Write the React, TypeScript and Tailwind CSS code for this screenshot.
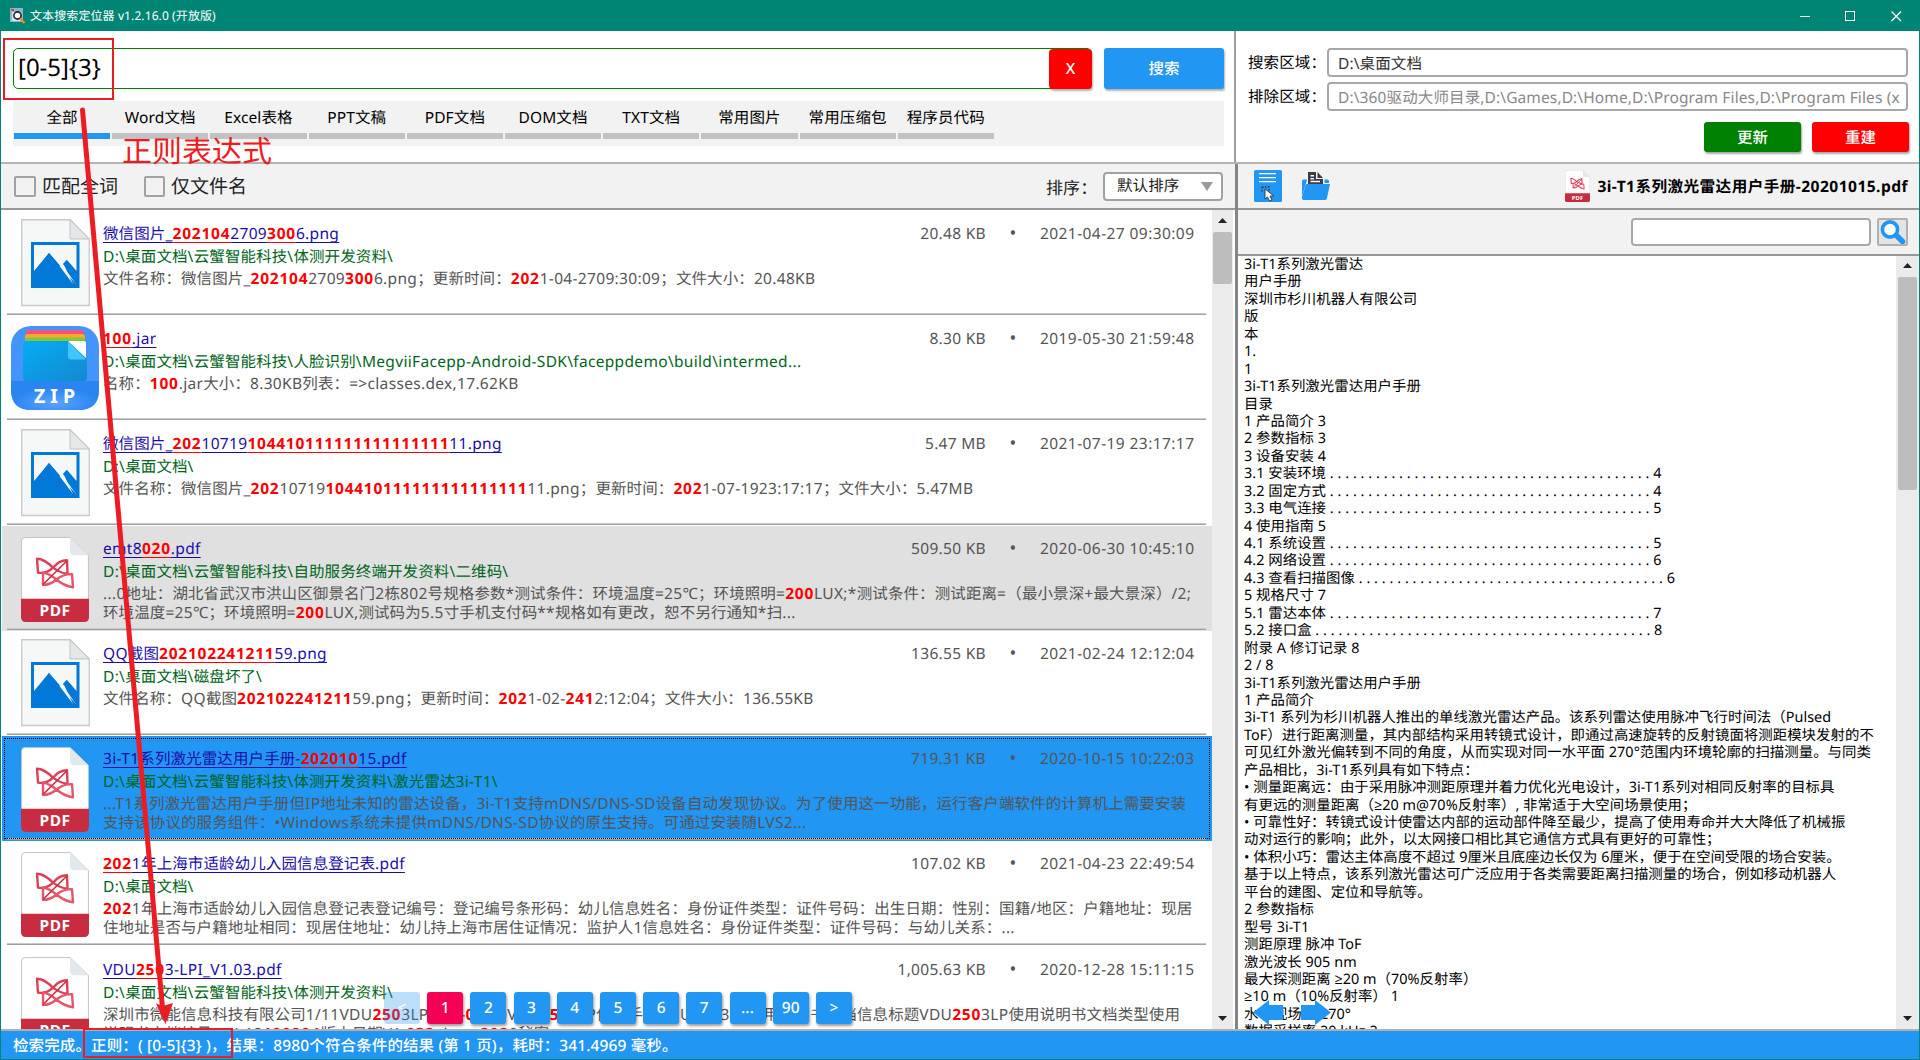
import React from "react";

type Kind = "image" | "zip" | "pdf";

interface Item {
  kind: Kind;
  title: string;
  path: string;
  desc: string[];
  size: string;
  date: string;
  state?: "hover" | "selected";
}

const items: Item[] = [
  {
    kind: "image",
    title: "微信图片_«202104»2709«300»6.png",
    path: "D:\\桌面文档\\云蟹智能科技\\体测开发资料\\",
    desc: ["文件名称：微信图片_«202104»2709«300»6.png；更新时间：«202»1-04-2709:30:09；文件大小：20.48KB"],
    size: "20.48 KB",
    date: "2021-04-27 09:30:09",
  },
  {
    kind: "zip",
    title: "«100».jar",
    path: "D:\\桌面文档\\云蟹智能科技\\人脸识别\\MegviiFacepp-Android-SDK\\faceppdemo\\build\\intermed...",
    desc: ["名称：«100».jar大小：8.30KB列表：=>classes.dex,17.62KB"],
    size: "8.30 KB",
    date: "2019-05-30 21:59:48",
  },
  {
    kind: "image",
    title: "微信图片_«202»10719«104410111111111111111»11.png",
    path: "D:\\桌面文档\\",
    desc: ["文件名称：微信图片_«202»10719«104410111111111111111»11.png；更新时间：«202»1-07-1923:17:17；文件大小：5.47MB"],
    size: "5.47 MB",
    date: "2021-07-19 23:17:17",
  },
  {
    kind: "pdf",
    title: "emt8«020».pdf",
    path: "D:\\桌面文档\\云蟹智能科技\\自助服务终端开发资料\\二维码\\",
    desc: [
      "...0地址：湖北省武汉市洪山区御景名门2栋802号规格参数*测试条件：环境温度=25℃；环境照明=«200»LUX;*测试条件：测试距离=（最小景深+最大景深）/2;",
      "环境温度=25℃；环境照明=«200»LUX,测试码为5.5寸手机支付码**规格如有更改，恕不另行通知*扫...",
    ],
    size: "509.50 KB",
    date: "2020-06-30 10:45:10",
    state: "hover",
  },
  {
    kind: "image",
    title: "QQ截图«202102241211»59.png",
    path: "D:\\桌面文档\\磁盘坏了\\",
    desc: ["文件名称：QQ截图«202102241211»59.png；更新时间：«202»1-02-«241»2:12:04；文件大小：136.55KB"],
    size: "136.55 KB",
    date: "2021-02-24 12:12:04",
  },
  {
    kind: "pdf",
    title: "3i-T1系列激光雷达用户手册-«202010»15.pdf",
    path: "D:\\桌面文档\\云蟹智能科技\\体测开发资料\\激光雷达3i-T1\\",
    desc: [
      "...T1系列激光雷达用户手册但IP地址未知的雷达设备，3i-T1支持mDNS/DNS-SD设备自动发现协议。为了使用这一功能，运行客户端软件的计算机上需要安装",
      "支持该协议的服务组件：•Windows系统未提供mDNS/DNS-SD协议的原生支持。可通过安装随LVS2...",
    ],
    size: "719.31 KB",
    date: "2020-10-15 10:22:03",
    state: "selected",
  },
  {
    kind: "pdf",
    title: "«202»1年上海市适龄幼儿入园信息登记表.pdf",
    path: "D:\\桌面文档\\",
    desc: [
      "«202»1年上海市适龄幼儿入园信息登记表登记编号：登记编号条形码：幼儿信息姓名：身份证件类型：证件号码：出生日期：性别：国籍/地区：户籍地址：现居",
      "住地址是否与户籍地址相同：现居住地址：幼儿持上海市居住证情况：监护人1信息姓名：身份证件类型：证件号码：与幼儿关系：...",
    ],
    size: "107.02 KB",
    date: "2021-04-23 22:49:54",
  },
  {
    kind: "pdf",
    title: "VDU«250»3-LPI_V1.03.pdf",
    path: "D:\\桌面文档\\云蟹智能科技\\体测开发资料\\",
    desc: [
      "深圳市微能信息科技有限公司1/11VDU«250»3LPI_V1-«0»01.0VDU«250»3LP使用手册VDU«250»3LP使用说明书文档信息标题VDU«250»3LP使用说明书文档类型使用",
      "说明书文档编号WN-19«100904»版本日期V1.«032»xinyu «202»0秘密",
    ],
    size: "1,005.63 KB",
    date: "2020-12-28 15:11:15",
  },
];

const dots = (n: number) => Array(n).fill(".").join(" ");

const docLines = [
  "3i-T1系列激光雷达",
  "用户手册",
  "深圳市杉川机器人有限公司",
  "版",
  "本",
  "1.",
  "1",
  "3i-T1系列激光雷达用户手册",
  "目录",
  "1 产品简介 3",
  "2 参数指标 3",
  "3 设备安装 4",
  "3.1 安装环境 " + dots(42) + " 4",
  "3.2 固定方式 " + dots(42) + " 4",
  "3.3 电气连接 " + dots(42) + " 5",
  "4 使用指南 5",
  "4.1 系统设置 " + dots(42) + " 5",
  "4.2 网络设置 " + dots(42) + " 6",
  "4.3 查看扫描图像 " + dots(40) + " 6",
  "5 规格尺寸 7",
  "5.1 雷达本体 " + dots(42) + " 7",
  "5.2 接口盒 " + dots(44) + " 8",
  "附录 A 修订记录 8",
  "2 / 8",
  "3i-T1系列激光雷达用户手册",
  "1 产品简介",
  "3i-T1 系列为杉川机器人推出的单线激光雷达产品。该系列雷达使用脉冲飞行时间法（Pulsed",
  "ToF）进行距离测量，其内部结构采用转镜式设计，即通过高速旋转的反射镜面将测距模块发射的不",
  "可见红外激光偏转到不同的角度，从而实现对同一水平面 270°范围内环境轮廓的扫描测量。与同类",
  "产品相比，3i-T1系列具有如下特点：",
  "• 测量距离远：由于采用脉冲测距原理并着力优化光电设计，3i-T1系列对相同反射率的目标具",
  "有更远的测量距离（≥20 m@70%反射率）, 非常适于大空间场景使用；",
  "• 可靠性好：转镜式设计使雷达内部的运动部件降至最少，提高了使用寿命并大大降低了机械振",
  "动对运行的影响；此外，以太网接口相比其它通信方式具有更好的可靠性；",
  "• 体积小巧：雷达主体高度不超过 9厘米且底座边长仅为 6厘米，便于在空间受限的场合安装。",
  "基于以上特点，该系列激光雷达可广泛应用于各类需要距离扫描测量的场合，例如移动机器人",
  "平台的建图、定位和导航等。",
  "2 参数指标",
  "型号 3i-T1",
  "测距原理 脉冲 ToF",
  "激光波长 905 nm",
  "最大探测距离 ≥20 m（70%反射率）",
  "≥10 m（10%反射率） 1",
  "水平视场角 270°",
  "数据采样率 20 kHz 2",
];

const tabs = ["全部", "Word文档", "Excel表格", "PPT文稿", "PDF文档", "DOM文档", "TXT文档", "常用图片", "常用压缩包", "程序员代码"];
const pages = ["<", "1", "2", "3", "4", "5", "6", "7", "...", "90", ">"];

/* Splits a string into highlighted («…»), Latin and CJK runs. */
function Marked({ text, link = false }: { text: string; link?: boolean }) {
  const line = link ? " underline decoration-1 underline-offset-[3px] [text-decoration-skip-ink:none]" : "";
  return (
    <>
      {text.split(/(«[^»]*»|[\x20-\x7e]+)/).map((part, i) =>
        part.startsWith("«") ? (
          <b key={i} className={"font-bold tracking-[0.75px] text-[#ff0000]" + line}>
            {part.slice(1, -1)}
          </b>
        ) : (
          <span key={i} className={(i % 2 ? "tracking-[0.32px]" : "tracking-[0.1px]") + line}>
            {part}
          </span>
        ),
      )}
    </>
  );
}

function ImageIcon() {
  return (
    <svg width="69" height="88" viewBox="0 0 69 88" className="block">
      <path d="M.75 .75H49L68.25 20V86.5H.75z" fill="#f6f8f8" stroke="#c6c9cb" strokeWidth="1.3" />
      <path d="M49 .75 68.25 20H49z" fill="#e4e6e7" stroke="#c2c5c7" strokeWidth="1" />
      <rect x="10" y="23" width="48.500" height="46" fill="#0078d7" />
      <path d="M13 26H55.500V52L46 41 42 46 46 51 55.500 66 28 34 13 52z" fill="#f6f8f8" />
      <path d="M13 54 28 34 46 55 55.500 66V68H13z" fill="#0078d7" />
      <path d="M41 46 45.500 41 56 53.500V66z" fill="#0078d7" />
      <path d="M38.500 47 52 65 43.500 47 41 44z" fill="#f6f8f8" />
    </svg>
  );
}

function PdfIcon({ small = false }: { small?: boolean }) {
  return (
    <svg width={small ? 25 : 68} height={small ? 32 : 85} viewBox="0 0 68 86" preserveAspectRatio="none" className="block">
      <path d="M4 .6H49L67.4 18.5V81Q67.4 85.4 63 85.4H5Q.6 85.4 .6 81V4Q.6 .6 4 .6z" fill="#fff" stroke="#bfc5ca" strokeWidth="1" />
      <path d="M49 .6 67.4 18.5H53Q49 18.5 49 15z" fill="#e3e8ec" />
      <path d="M0 62.5H68V81Q68 86 63 86H5Q0 86 0 81z" fill="#c72c41" />
      <g fill="none" strokeWidth={small ? 3 : 2.4} strokeLinejoin="round">
        <path d="M16 22C22 22 28 27 32 31 36 26 40 23.500 46 23.500L46.500 37C40 37 35 33 32 31 28 35 22 37 17 36z" stroke="#dc3f56" />
        <path d="M22 36C28 37 32 40 35.500 43 40 39 46 37.500 51 37.500L52 51C46 50 40 47 35.500 43 31 47 27 48.500 22 48.500z" stroke="#e85468" />
        <path d="M46 24 22 48" stroke="#cc2f45" strokeWidth={small ? 2 : 1.6} />
      </g>
      <text x="34" y="79.5" textAnchor="middle" className="font-['Noto_Sans'] text-[15.5px] font-bold tracking-[0.5px]" fill="#fff">
        PDF
      </text>
    </svg>
  );
}

function ZipIcon() {
  return (
    <svg width="88" height="84" viewBox="0 0 88 84" className="-ml-px block">
      <defs>
        <linearGradient id="folder" x1="0" y1="0" x2="1" y2="1">
          <stop offset="0" stopColor="#04acf5" />
          <stop offset="1" stopColor="#1489cf" />
        </linearGradient>
        <radialGradient id="base" cx=".5" cy=".75" r=".5">
          <stop offset="0" stopColor="#5aa5fb" />
          <stop offset="1" stopColor="#2a84f2" />
        </radialGradient>
      </defs>
      <rect width="88" height="84" rx="20" fill="#4395fc" />
      <path d="M0 55H88V64Q88 84 68 84H20Q0 84 0 64z" fill="url(#base)" />
      <rect x="15" y="4" width="58" height="14" rx="3" fill="#f2537c" />
      <rect x="14" y="8" width="60" height="12" rx="3" fill="#fba928" />
      <rect x="14" y="11.500" width="60" height="12" rx="3" fill="#7ec83a" />
      <path d="M14 15H57L76 33V52Q76 55 73 55H15Q12 55 12 52V17Q12 15 14 15z" fill="url(#folder)" />
      <path d="M57 15H73Q75 15 75 17V32z" fill="#fff" />
      <path d="M57 15 75 33.500H60Q57 33.500 57 30z" fill="#43c5fb" />
      <text x="46" y="77" textAnchor="middle" className="font-['Noto_Sans'] text-[19.500px] font-bold tracking-[5px]" fill="#fff">
        ZIP
      </text>
    </svg>
  );
}

function Row({ item, last }: { item: Item; last: boolean }) {
  const bg = item.state === "hover" ? "bg-[#e0e0e0]" : item.state === "selected" ? "bg-[#2196f3]" : "bg-white";
  return (
    <div className={"relative flex h-[105px] w-[1210px] shrink-0 " + bg}>
      <div className="flex w-[101px] shrink-0 justify-center pl-[5px]">
        <div className={item.kind === "zip" ? "pt-[10px]" : item.kind === "pdf" ? "pt-[11px]" : "pt-[8px]"}>
          {item.kind === "image" ? <ImageIcon /> : item.kind === "zip" ? <ZipIcon /> : <PdfIcon />}
        </div>
      </div>
      <div className={"flex min-w-0 flex-1 flex-col " + (last ? "pt-[12px]" : "pt-[11px]")}>
        <div className="flex h-[23px] items-center whitespace-nowrap leading-[23px]">
          <div className="flex-1 text-[#1a0dab]">
            <Marked text={item.title} link />
          </div>
          <div className="tracking-[0.3px] text-[#555]">{item.size}</div>
          <div className="w-[54px] text-center text-[18px] text-[#555]">•</div>
          <div className="w-[172px] tracking-[0.42px] text-[#555]">{item.date}</div>
        </div>
        <div className="h-[23px] leading-[23px] whitespace-nowrap text-[#006621]">
          <Marked text={item.path} />
        </div>
        <div className="pt-px">
          {item.desc.map((d) => (
            <div key={d} className="h-[19px] leading-[19px] whitespace-nowrap text-[#555]">
              <Marked text={d} />
            </div>
          ))}
        </div>
      </div>
      <div className="absolute bottom-px left-[5px] h-[2px] w-[1199px] border-t border-[#c9c9c9] bg-[#a0a0a0]" />
      {item.state === "selected" && <div className="absolute inset-[2px] border border-dotted border-black" />}
    </div>
  );
}

function Arrow({ down = false }: { down?: boolean }) {
  return (
    <svg width="9" height="5" viewBox="0 0 9 5" className="mx-auto block">
      <path d={down ? "M0 0H9L4.500 5z" : "M0 5H9L4.500 0z"} fill="#222" />
    </svg>
  );
}

const field = "rounded-[4px] border-2 border-[#a8a8a8] bg-white";

export default function App() {
  return (
    <div className="relative flex h-[1060px] w-[1920px] flex-col overflow-hidden border-r border-b border-l border-[#008575] bg-white font-['Noto_Sans','Open_Sans','Liberation_Sans','Noto_Sans_CJK_SC',sans-serif] text-[15.5px] tracking-[0.12px] text-black [text-rendering:geometricPrecision]">
      <header className="-mx-px flex h-[31px] shrink-0 items-center bg-[#008575] pl-[9px] text-white">
        <svg width="17" height="17" viewBox="0 0 17 17" className="mr-[4px]">
          <rect x="1" y="1" width="13" height="14" fill="#8fb4cf" />
          <rect x="2" y="2" width="3" height="2" fill="#d9482b" />
          <rect x="3" y="5" width="9" height="9" fill="#d7e4ee" />
          <circle cx="8.500" cy="8.500" r="3.600" fill="#fff" stroke="#222" strokeWidth="1.600" />
          <path d="M11 11.500 15.500 16" stroke="#f08a24" strokeWidth="2.400" />
        </svg>
        <span className="flex-1 text-[12px] tracking-[0.1px]">文本搜索定位器 v1.2.16.0 (开放版)</span>
        <svg width="125" height="12" viewBox="0 0 125 12" fill="none" stroke="#fff" className="block">
          <path d="M5 6.500H15" />
          <rect x="50.500" y="1.500" width="9" height="9" />
          <path d="M96.500 1.500 106 11M106 1.500 96.500 11" strokeWidth="1.200" />
        </svg>
      </header>

      <div className="flex h-[133px] shrink-0 border-b-2 border-[#b5b5b5]">
        <section className="flex w-[1235px] shrink-0 flex-col border-r-2 border-[#a0a0a0] pt-[17px] pl-[12px]">
          <div className="flex">
            <div className="flex h-[41px] w-[1079px] justify-between rounded-[5px] border border-[#008000]">
              <span className="pl-[4px] text-[24px] leading-[38px] tracking-[0px]">[0-5]{"{3}"}</span>
              <span className="-mr-px h-[40px] w-[43px] rounded-[4px] bg-[#ff0000] text-center leading-[38px] font-medium text-white shadow-[1px_2px_2px_rgba(0,0,0,0.3)]">X</span>
            </div>
            <div className="ml-[12px] h-[41px] w-[120px] rounded-[3px] bg-[#2196f3] text-center leading-[40px] font-medium text-white shadow-[1px_2px_2px_rgba(0,0,0,0.3)]">搜索</div>
          </div>
          <div className="mt-[12px] flex h-[45px] w-[1211px] bg-[#f2f2f2] pl-px">
            {tabs.map((t, i) => (
              <div key={t} className="w-[98.2px] pr-[2px]">
                <div className="h-[32px] text-center leading-[33px]">{t}</div>
                <div className={"h-[6px] " + (i === 0 ? "bg-[#2196f3]" : "bg-[#c2c2c4]")} />
              </div>
            ))}
          </div>
        </section>
        <section className="flex-1 pt-[17px] pl-[12px]">
          <div className="flex items-center">
            <span className="w-[79px]">搜索区域：</span>
            <div className={field + " h-[29px] w-[581px] pl-[9px] leading-[26px] text-[#333]"}>D:\桌面文档</div>
          </div>
          <div className="mt-[5px] flex items-center">
            <span className="w-[79px]">排除区域：</span>
            <div className={field + " h-[29px] w-[581px] px-[9px] leading-[26px] text-[#888]"}>
              <div className="w-[562px] overflow-hidden whitespace-nowrap">D:\360驱动大师目录,D:\Games,D:\Home,D:\Program Files,D:\Program Files (x86)</div>
            </div>
          </div>
          <div className="mt-[11px] ml-[456px] flex gap-[11px] text-center leading-[30px] font-medium text-white">
            <div className="h-[30px] w-[97px] rounded-[3px] bg-[#008000] shadow-[1px_2px_2px_rgba(0,0,0,0.35)]">更新</div>
            <div className="h-[30px] w-[97px] rounded-[3px] bg-[#ff0000] shadow-[1px_2px_2px_rgba(0,0,0,0.35)]">重建</div>
          </div>
        </section>
      </div>

      <main className="flex h-[867px] shrink-0 border-b-2 border-[#b0b0b0]">
        <section className="relative flex w-[1234px] shrink-0 flex-col">
          <div className="flex h-[46px] shrink-0 items-center border-b-2 border-[#989898] bg-[#f2f2f2] pl-[13px] text-[#222]">
            <span className="h-[21px] w-[22px] rounded-[2px] border-2 border-[#a2a2a2]" />
            <span className="ml-[6px] w-[102px] text-[19px] tracking-[0px]">匹配全词</span>
            <span className="h-[21px] w-[21px] rounded-[2px] border-2 border-[#a2a2a2]" />
            <span className="ml-[6px] flex-1 text-[19px] tracking-[0px]">仅文件名</span>
            <span className="mt-[3px] w-[57px] text-[17px]">排序：</span>
            <div className="mr-[12px] flex h-[29px] w-[120px] items-center justify-between rounded-[4px] border-2 border-[#a2a2a2] bg-white pr-[8px] pl-[12px]">
              默认排序
              <svg width="12" height="9" viewBox="0 0 12 9">
                <path d="M0 0H12L6 9z" fill="#9a9a9a" />
              </svg>
            </div>
          </div>
          <div className="flex min-h-0 flex-1">
            <div className="flex w-[1211px] flex-col overflow-hidden pt-px pl-px">
              {items.map((it, i) => (
                <Row key={it.title} item={it} last={i === items.length - 1} />
              ))}
            </div>
            <div className="flex w-[21px] flex-col justify-between bg-[#ebebeb] pt-[8px] pb-[8px]">
              <div>
                <Arrow />
                <div className="mx-px mt-[9px] h-[52px] rounded-[2px] bg-[#bdbdbd]" />
              </div>
              <Arrow down />
            </div>
          </div>
          <div className="absolute bottom-[5px] left-[383px] flex gap-[7.200px]">
            {pages.map((p, i) => (
              <div
                key={p}
                className={
                  "h-[32px] w-[36px] rounded-[3px] text-center leading-[31px] font-medium text-white " +
                  (i === 0 ? "bg-[#2196f3] opacity-30" : i === 1 ? "bg-[#f50057] shadow-[1px_2px_3px_rgba(0,0,0,0.4)]" : "bg-[#2196f3] shadow-[1px_2px_3px_rgba(0,0,0,0.4)]")
                }
              >
                {p}
              </div>
            ))}
          </div>
        </section>
        <div className="w-[3px] shrink-0 bg-[#858585]" />
        <section className="relative flex w-[681px] shrink-0 flex-col">
          <div className="flex h-[46px] shrink-0 items-center border-b-2 border-[#989898] bg-[#f2f2f2] pl-[16px]">
            <svg width="28" height="32" viewBox="0 0 28 32">
              <rect width="28" height="32" rx="1.500" fill="#2196f3" />
              <path d="M5 3.700H22M5 7.700H22M5 11.700H22" stroke="#fff" strokeWidth="1.200" />
              <path d="M8 17H15V22M8 17V23" fill="none" stroke="#333" strokeWidth="1.300" strokeDasharray="1.500 1.500" />
              <path d="M11 19V29L13.500 27 15.500 31 18 30 16 26H20z" fill="#fff" stroke="#333" strokeWidth=".9" />
            </svg>
            <svg width="28" height="28" viewBox="0 0 28 28" className="ml-[20px]">
              <path d="M6 0H14V7H21V13H6z" fill="#3d3d4a" />
              <path d="M15.500 0 21 6H15.500z" fill="#3d3d4a" />
              <path d="M8.500 3.700H12M8.500 6.700H12M8.500 9.500H18" stroke="#fff" strokeWidth="1.400" />
              <path d="M0 9Q0 7.500 1.500 7.500H5L4 11.500 0 24z" fill="#2196f3" />
              <path d="M22.500 7.500H25.500Q27 7.500 27 9V11H22.500z" fill="#2196f3" />
              <path d="M4 12H28L25 26Q24.700 28 23 28H1.500Q0 28 0 26V24.500z" fill="#2196f3" />
            </svg>
            <div className="ml-auto flex items-center gap-[6px] pr-[11px]">
              <PdfIcon small />
              <span className="mt-px w-[312px] text-right text-[15.600px] font-bold tracking-[0.440px] whitespace-nowrap">3i-T1系列激光雷达用户手册-20201015.pdf</span>
            </div>
          </div>
          <div className="flex h-[46px] shrink-0 items-center justify-end gap-[6px] border-b-2 border-[#989898] bg-[#f2f2f2] pr-[11px]">
            <div className={field + " h-[28px] w-[240px]"} />
            <div className="flex h-[28px] w-[31px] items-center justify-center rounded-[2px] border-2 border-[#b0b0b0] bg-[#e4e4e4]">
              <svg width="27" height="24" viewBox="0 0 27 24" className="shrink-0">
                <path d="M16 14 23.500 21.500" stroke="#2196f3" strokeWidth="5.500" strokeLinecap="round" />
                <circle cx="11" cy="9.500" r="7.600" fill="#fff" stroke="#2196f3" strokeWidth="3.600" />
              </svg>
            </div>
          </div>
          <div className="flex min-h-0 flex-1">
            <div className="flex-1 overflow-hidden pl-[6px] text-[14.400px] leading-[17.450px] tracking-[0.05px]">
              {docLines.map((l, i) => (
                <div key={i} className="h-[17.450px] whitespace-pre">{l}</div>
              ))}
            </div>
            <div className="flex w-[23px] flex-col justify-between bg-[#ebebeb] pt-[7px] pb-[8px]">
              <div>
                <Arrow />
                <div className="mx-[2px] mt-[9px] h-[213px] rounded-[2px] bg-[#bdbdbd]" />
              </div>
              <Arrow down />
            </div>
          </div>
          <svg width="78" height="25" viewBox="0 0 78 25" className="absolute bottom-[4px] left-[15px]">
            <path d="M0 12.500 16 0V5H30V20H16V25z" fill="#2196f3" />
            <path d="M78 12.500 62 0V5H48V20H62V25z" fill="#2196f3" />
          </svg>
        </section>
      </main>

      <footer className="flex-1 bg-[#2196f3] pl-[12px] leading-[28px] font-medium whitespace-pre text-white">
        检索完成。正则：( [0-5]{"{3}"} )，结果：8980个符合条件的结果 (第 1 页)，耗时：341.4969 毫秒。
      </footer>

      <div className="pointer-events-none absolute top-0 -left-px">
        <svg width="300" height="1060" viewBox="0 0 300 1060" fill="none" className="block">
          <rect x="4" y="39" width="109" height="60" stroke="#ed1c24" strokeWidth="2" />
          <rect x="84" y="1029" width="148" height="28" stroke="#ed1c24" strokeWidth="2" />
          <path d="M82.500 110 162.500 1008" stroke="#ed1c24" strokeWidth="5" strokeLinecap="round" />
          <path d="M165.500 1024 156 1003.500 163 1006 173 1003z" fill="#ed1c24" />
          <text x="122" y="162" className="font-['Noto_Sans_CJK_SC'] text-[30px] tracking-[0px]" fill="#ed1c24">正则表达式</text>
        </svg>
      </div>
    </div>
  );
}
